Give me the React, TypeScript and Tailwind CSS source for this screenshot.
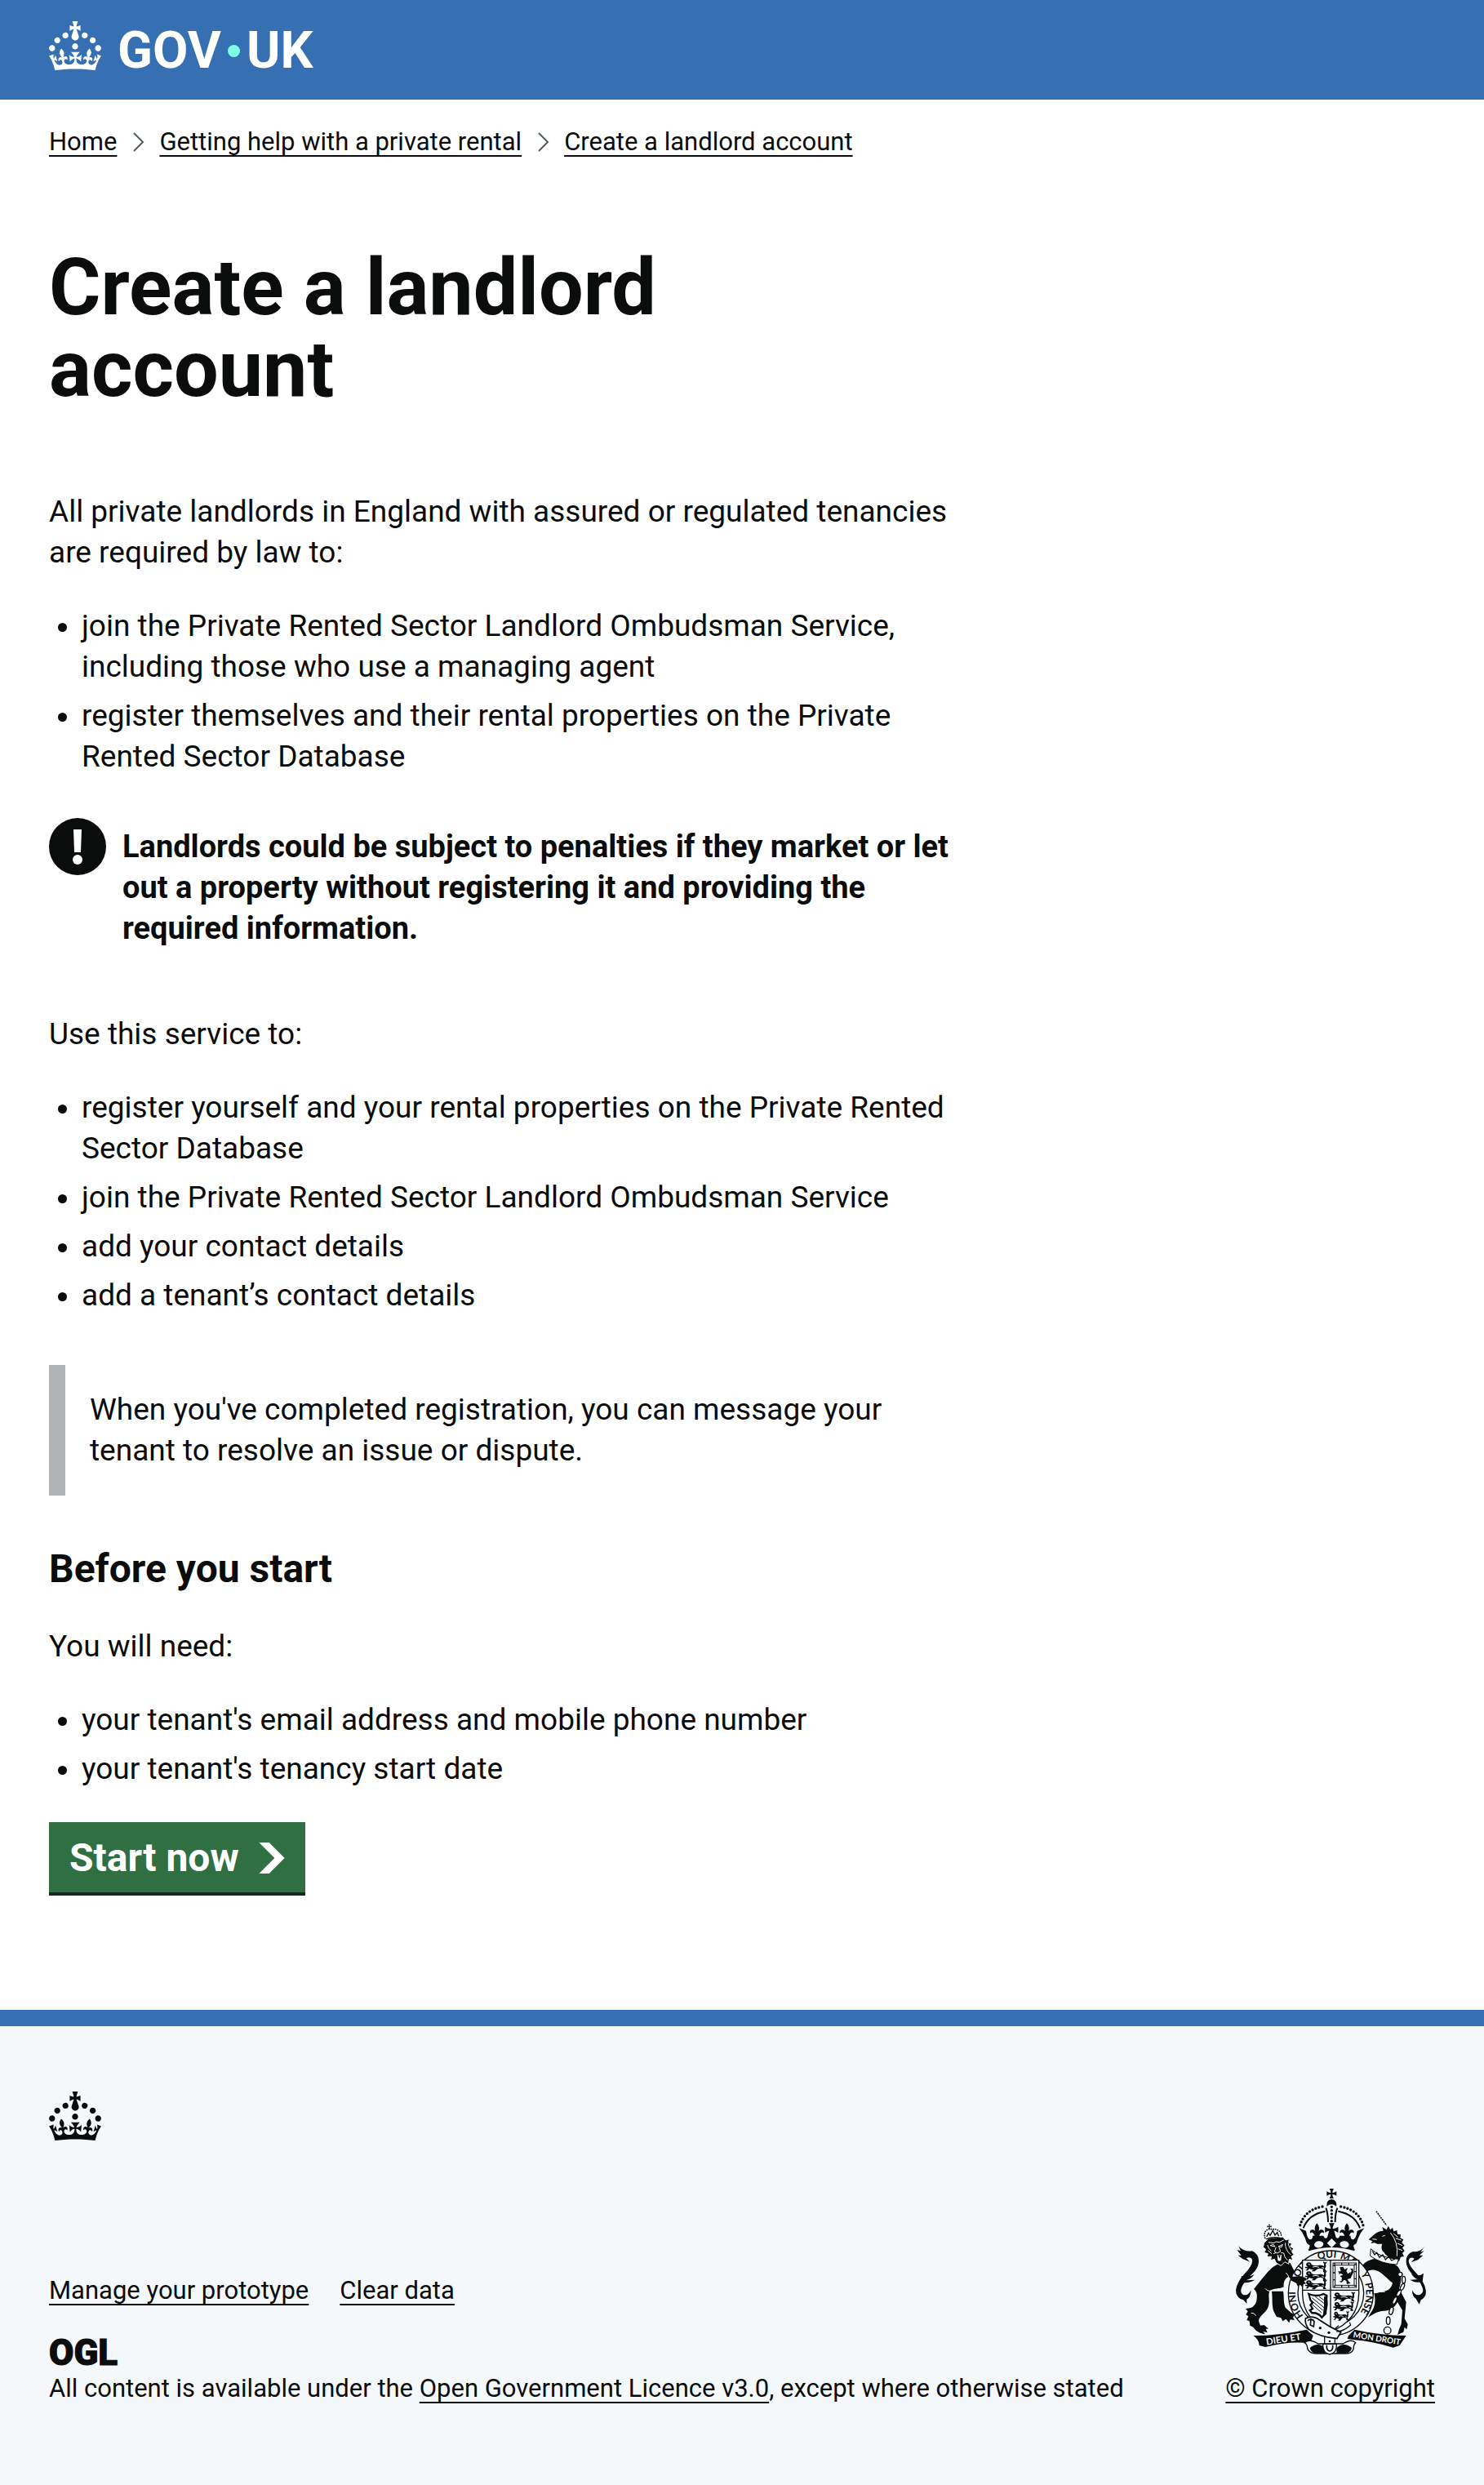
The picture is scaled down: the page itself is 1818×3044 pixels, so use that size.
import type { ReactNode } from "react";

const CROWN_PATH =
  "M22.6 10.4c-1 .4-2-.1-2.4-1-.4-.9.1-2 1-2.4.9-.4 2 .1 2.4 1s-.1 2-1 2.4m-5.9 6.7c-.9.4-2-.1-2.4-1-.4-.9.1-2 1-2.4.9-.4 2 .1 2.4 1s-.1 2-1 2.4m10.8-3.7c-1 .4-2-.1-2.4-1-.4-.9.1-2 1-2.4.9-.4 2 .1 2.4 1s0 2-1 2.4m3.3 4.8c-1 .4-2-.1-2.4-1-.4-.9.1-2 1-2.4.9-.4 2 .1 2.4 1s-.1 2-1 2.4M17 4.7l2.3 1.2V2.5l-2.3.7-.2-.2.9-3h-3.4l.9 3-.2.2c-.1.1-2.3-.7-2.3-.7v3.4L15 4.7c.1.1.1.2.2.2l-1.3 4c-.1.2-.1.4-.1.6 0 1.1.8 2 1.9 2.2h.7c1-.2 1.9-1.1 1.9-2.1 0-.2 0-.4-.1-.6l-1.3-4c-.1-.2 0-.2.1-.3m-7.6 5.7c.9.4 2-.1 2.4-1 .4-.9-.1-2-1-2.4-.9-.4-2 .1-2.4 1s0 2 1 2.4m-5 3c.9.4 2-.1 2.4-1 .4-.9-.1-2-1-2.4-.9-.4-2 .1-2.4 1s.1 2 1 2.4m-3.2 4.8c.9.4 2-.1 2.4-1 .4-.9-.1-2-1-2.4-.9-.4-2 .1-2.4 1s0 2 1 2.4m14.8 11c4.4 0 8.6.3 12.3.8 1.1-4.5 2.4-7 3.7-8.8l-2.5-.9c.2 1.3.3 1.9 0 2.7-.4-.4-.8-1.1-1.1-2.3l-1.2 4c.7-.5 1.3-.8 2-.9-1.1 2.5-2.6 3.1-3.5 3-1.1-.2-1.7-1.2-1.5-2.1.3-1.2 1.5-1.5 2.1-.1 1.1-2.3-.8-3-2-2.3 1.9-1.9 2.1-3.5.6-5.6-2.1 1.6-2.1 3.2-1.2 5.5-1.2-1.4-3.2-.6-2.5 1.6.9-1.4 2.1-.5 1.9.8-.2 1.1-1.7 2.1-3.5 1.9-2.7-.2-2.9-2.1-2.9-3.6.7-.1 1.9.5 2.9 1.9l.4-4.3c-1.1 1.1-2.1 1.4-3.2 1.4.4-1.2 2.1-3 2.1-3h-5.4s1.7 1.9 2.1 3c-1.1 0-2.1-.2-3.2-1.4l.4 4.3c1-1.4 2.2-2 2.9-1.9-.1 1.5-.2 3.4-2.9 3.6-1.9.2-3.4-.8-3.5-1.9-.2-1.3 1-2.2 1.9-.8.7-2.3-1.2-3-2.5-1.6.9-2.2.9-3.9-1.2-5.5-1.5 2-1.3 3.7.6 5.6-1.2-.7-3.1 0-2 2.3.6-1.4 1.8-1.1 2.1.1.2.9-.3 1.9-1.5 2.1-.9.2-2.4-.5-3.5-3 .6 0 1.2.3 2 .9l-1.2-4c-.3 1.1-.7 1.9-1.1 2.3-.3-.8-.2-1.4 0-2.7l-2.9.9C1.3 23 2.6 25.5 3.7 30c3.7-.5 7.9-.8 12.3-.8";

function Crown() {
  return (
    <svg viewBox="0 0 32 30" className="h-[60px] w-16 fill-current" aria-hidden="true">
      <path fillRule="evenodd" d={CROWN_PATH} />
    </svg>
  );
}

function TextLink({ children }: { children: ReactNode }) {
  return (
    <a href="#" className="underline decoration-2 underline-offset-[6px] [text-decoration-skip-ink:none]">
      {children}
    </a>
  );
}

function Chevron() {
  return (
    <svg viewBox="0 0 14 24" className="mr-[18px] ml-5 h-6 w-3.5 fill-none stroke-[#505a5f] stroke-2" aria-hidden="true">
      <path d="M1 1l11 11L1 23" />
    </svg>
  );
}

function BulletList({ items }: { items: string[] }) {
  return (
    <ul className="mb-10 list-disc space-y-2.5 pl-10">
      {items.map((item) => (
        <li key={item}>{item}</li>
      ))}
    </ul>
  );
}

function RoyalArms() {
  const ink = "#0b0c0c";
  const paper = "#f4f8fb";
  return (
    <svg viewBox="90 60 708 618" className="h-[206px] w-[236px]" aria-hidden="true" fill={ink} stroke="none">
      <defs>
        <path id="garterText" d="M365 549a130 130 0 1 1 160 0" />
        <g id="passant">
          <path d="M4 8q2-8 12-7 8 1 8 8 10 5 24 3 14-3 22 3l1-9q-6-3-4-8 8 6 14 0-1 8-5 8 3 14-3 18l5 9h-12l2-6q-12-7-24-1l-8 8h-12l7-7q-10 1-15-3l-6 7H2l8-8-10-2 1-4 9 1q-5-4-6-10z" />
          <path d="M12 8l6 1M28 18q12-4 24 1M62 20l8 2" stroke={paper} strokeWidth="3" fill="none" />
        </g>
        <path id="cross" d="M-8-18H8Q2-8 3-3 9-2 18-8V8Q9 2 3 3 2 9 8 18H-8Q-2 9-3 3-9 2-18 8V-8Q-9-2-3-3-2-8-8-18z" />
        <path id="lis" d="M0-32q14 16 4 34 4-13 15-10 9 3 6 13-5-6-11-1-6 6-6 18H-8q0-12-6-18-6-5-11 1-3-10 6-13 11-3 15 10-10-18 4-34z" />
      </defs>

      {/* lion */}
      <path d="M242 345C222 355 200 385 162 432C172 440 176 450 172 475C168 490 160 500 146 502L132 504 140 514 133 526 142 532 136 546 146 550 148 566 160 572C172 590 186 594 204 598L196 588 212 592 206 578 216 578 200 564 186 566 180 550C180 530 206 520 214 500C224 476 212 456 220 440C232 428 258 432 272 424C270 408 276 392 290 386C300 400 318 408 328 422L334 412 346 426 346 410 356 408 346 396 350 388 330 384C314 376 306 356 296 336L270 330z" />
      <path d="M228 440H270C274 460 270 480 278 500L300 520 312 526 306 536 312 546 296 544 292 556 280 542 268 550 262 538 246 534 238 520C226 496 232 470 228 440z" />
      <path
        d="M200 262L216 246 268 240 280 252 292 248 290 262 302 264 296 276 308 282 302 296 310 306 300 312 306 326 292 322 290 340 276 332 262 346 244 336 238 322 224 326 226 312 210 314 214 302 200 298 206 286 196 278z"
        stroke={paper}
        strokeWidth="3"
      />
      <g stroke={paper} strokeWidth="3" fill="none">
        <path d="M216 260l18 3 10-5 12 2 16-8M222 272l12-4 6 8zM252 276l16-8-4 10zM244 278l-6 16 10 6 12-6-4-14M234 302l10-4M262 298l10 2M278 262q-2 26 20 44M288 264q2 14 14 28M272 300q2 16 14 26M212 270q4 14 14 22M214 290l14 12M204 430q10 14 28 6M152 520q12-2 18 10M280 372q8 8 10 14" />
      </g>
      <path d="M248 306q8 4 16 0l-2 20q-6 6-12 0z" fill={paper} />
      <path d="M252 308l4 12 4-12z" />
      <g fill="none" stroke={ink} strokeLinecap="round">
        <path d="M203 244q-7-24 13-32h26q24 7 20 28" strokeWidth="5" strokeDasharray="1 7" />
        <path d="M208 248q24-9 50-4M210 238l6-12 6 9 10-18 8 17 8-10 5 12" strokeWidth="4" />
      </g>
      <use href="#cross" transform="translate(219 202) scale(.45)" />
      <path d="M106 274q18 22 50 18 26 12 24 40-2 24-22 42-24 22-38 46-12 22 2 32 18 8 30-16-2 28-16 34l0 16-12-14q-28-6-28-36 4-30 32-60 32-34 28-52-4-12-22-6l14 14-26-10-18-14 12 0-16-20 14 4z" />
      <path d="M116 384q24 8 48-6-12 18-32 22l34-2q-22 14-48 10z" />

      {/* unicorn */}
      <path d="M612 146l38 52" stroke={ink} strokeWidth="5" strokeDasharray="6 3" fill="none" />
      <path d="M600 322C640 316 672 336 690 348C708 366 706 400 696 430L722 480 716 540 728 562 724 580 716 572 712 590 690 600 696 580 704 560 708 510 690 480C680 500 662 512 640 512C614 514 600 524 582 536L590 522C606 500 612 480 604 448L640 440C660 438 668 424 672 410C650 392 630 366 606 362C590 360 574 366 568 380L570 400 578 420 572 446 562 442 556 420C548 396 548 366 560 348C570 330 590 326 600 322z" />
      <path d="M584 250L606 230Q620 218 638 218L634 204 650 214 656 200 664 214 672 206 676 220 688 216 690 230 702 232 700 244 712 250 706 260 716 272 708 280 716 292 708 300 714 312 702 314 696 330 680 322C660 320 646 306 640 296C630 290 630 276 634 266L616 266 606 262 592 264 598 256z" />
      <path
        d="M634 238l10-3M598 248l16 2M664 225q30 34 24 86M676 228l16 14M684 246l20 6M690 264l18 8M692 284l16 6"
        stroke={paper}
        strokeWidth="3"
        fill="none"
      />
      <path d="M592 284q34 34 102 38l-6 20q-58-2-98-32z" fill={paper} stroke={ink} strokeWidth="3" />
      <path d="M598 292l8 14 8-8 10 18 12-10 10 18 12-12 10 15 14-7" fill="none" stroke={ink} strokeWidth="4" />
      <path d="M610 446q14-6 34-4" stroke={paper} strokeWidth="3" fill="none" />
      <path d="M792 274q-18 24-44 20-28 8-26 40 2 24 24 44 24 20 34 44 10 22-6 30-18 8-30-16 0 24 14 32l12 20 6-16q22-10 18-36-4-30-36-64-32-34-26-48 6-12 20-4l-12 14 26-10 18-16-14 0 18-16-14 4z" />
      <path d="M786 374q-20 16-46 0 12 20 26 22l-30 2q20 14 46 6z" />
      <g fill={paper} stroke={ink} strokeWidth="4">
        <ellipse cx="700" cy="378" rx="8" ry="8" />
        <ellipse cx="713" cy="398" rx="6" ry="13" />
        <ellipse cx="708" cy="424" rx="6" ry="13" transform="rotate(25 708 424)" />
        <ellipse cx="695" cy="447" rx="6" ry="13" transform="rotate(30 695 447)" />
        <ellipse cx="680" cy="474" rx="6" ry="14" transform="rotate(25 680 474)" />
        <ellipse cx="667" cy="512" rx="7" ry="14" transform="rotate(15 667 512)" />
        <ellipse cx="656" cy="548" rx="7" ry="14" />
        <circle cx="653" cy="584" r="13" />
      </g>

      {/* garter */}
      <circle cx="445" cy="447" r="156" fill={paper} stroke={ink} strokeWidth="4" />
      <circle cx="445" cy="447" r="121" fill="none" stroke={ink} strokeWidth="4" />
      <g fontFamily="Lato, sans-serif" fontSize="36" fontWeight="700">
        <text><textPath href="#garterText" startOffset="28">HONI</textPath></text>
        <text><textPath href="#garterText" startOffset="155">SOIT</textPath></text>
        <text><textPath href="#garterText" startOffset="275">QUI</textPath></text>
        <text><textPath href="#garterText" startOffset="355">MAL</textPath></text>
        <text><textPath href="#garterText" startOffset="452">Y</textPath></text>
        <text><textPath href="#garterText" startOffset="490">PENSE</textPath></text>
      </g>

      {/* shield */}
      <path d="M341 326H548V450Q546 548 445 588 343 548 341 450z" fill={paper} stroke={ink} strokeWidth="4" />
      <path d="M444 326V586M341 436H548" stroke={ink} strokeWidth="4" />
      <use href="#passant" x="350" y="333" />
      <use href="#passant" x="350" y="366" />
      <use href="#passant" x="350" y="399" />
      <use href="#passant" x="454" y="444" />
      <use href="#passant" transform="translate(454 479) scale(.95 1)" />
      <use href="#passant" transform="translate(454 514) scale(.72 1)" />
      <rect x="453" y="336" width="86" height="90" fill="none" stroke={ink} strokeWidth="3" />
      <rect x="461" y="344" width="70" height="74" fill="none" stroke={ink} strokeWidth="3" />
      <path d="M457 340H535V422H457z" fill="none" stroke={ink} strokeWidth="9" strokeDasharray="4 22" />
      <path d="M478 352l12-2 6 10 12-6-6 12 6 10 10-8-2 10 6-14-6-6 10-2 2 14-10 22-12 4 6 10 6 4-14 4-2-12-8-4-10 10-8-4 8-2 2-12-8-6 12-4-8-6-8 4 2-6-6-4 12-2z" />
      <path
        d="M364 450q30 12 54 0l12 6-4 66-14 14q-14-18-36-16l-8-10 10-6-8-14 8-8-8-10z"
        fill="none"
        stroke={ink}
        strokeWidth="7"
      />
      <path d="M376 464l44 36M376 476l40 34M376 488l34 30M388 460l34 26M402 460l20 14" stroke={ink} strokeWidth="3" />
      <path d="M428 458q14 28-4 66l-8 6q6-36 4-70z" />
      <path d="M300 388l30 -4 22 6 4 10-10 2 8 10-10 2-2 12-10-10-8 6-6-12-20-10z" />

      {/* crown */}
      <path d="M328 206q60-30 240 2l-26 82q-98-32-184 0z" fill={paper} />
      <path d="M328 208l26 10q4 28 14 32 12-2 10-14h40q4 14 14 6l8-28h16l8 28q10 8 14-6h40q-2 12 10 14 10-4 14-32l26-10q-26 30-36 84-84-26-168 0-10-54-36-84z" />
      <use href="#lis" x="394" y="222" />
      <use href="#lis" x="504" y="222" />
      <use href="#cross" transform="translate(448 214) scale(1.35)" />
      <g fill={paper}>
        <path d="M448 246l17 17-17 17-17-17zM358 264l10 8-4 14-10-5zM538 264l-10 8 4 14 10-5z" />
        <ellipse cx="401" cy="268" rx="17" ry="12" transform="rotate(-8 401 268)" />
        <ellipse cx="495" cy="268" rx="17" ry="12" transform="rotate(8 495 268)" />
      </g>
      <g fill="none" stroke={ink}>
        <path d="M424 146Q362 158 344 208M472 146Q534 158 552 208" strokeWidth="6" />
        <path
          d="M414 129Q346 142 331 202M482 129Q550 142 565 202"
          strokeWidth="10"
          strokeLinecap="round"
          strokeDasharray="0 12.5"
        />
        <path d="M427 134q8 20 8 52M469 134q-8 20-8 52" strokeWidth="6" />
        <path d="M448 130v60" strokeWidth="10" strokeLinecap="round" strokeDasharray="0 13" />
      </g>
      <path d="M430 128q-2-24 18-26 20 2 18 26-18-14-36 0z" />
      <use href="#cross" x="448" y="81" />

      {/* ribbons and buckle */}
      <path d="M160 603q96 0 196-22l24 22-6 18-26 8q-70-4-144 16l-22-6q0-22-22-36z" />
      <path d="M722 603q-100-2-190-22l-22 22-4 12 26 4q60 4 142 28l24-8z" />
      <g fontFamily="Lato, sans-serif" fontWeight="700" fill={paper}>
        <text transform="translate(209 638) rotate(-9)" fontSize="34">DIEU ET</text>
        <text transform="translate(526 610) rotate(9)" fontSize="30">MON DROIT</text>
      </g>
      <path
        d="M348 629q10 4 12 24 8 16 30 16h108q24 0 30-16 0-16 8-24-16-16-46 4h-92q-30-20-50-4z"
        fill={paper}
        stroke={ink}
        strokeWidth="4"
      />
      <path d="M368 648q30-24 56 0v20h-36q-18-4-20-20zM522 648q-30-24-56 0v20h36q18-4 20-20z" />
      <path d="M352 540q26-14 52 6 36 26 78 44l-14 24q-66-6-104-34-16-22-12-40z" fill={paper} stroke={ink} strokeWidth="5" />
      <path d="M372 542l12 8-2 20-12-6zM360 548q10-8 22-2" fill="none" stroke={ink} strokeWidth="5" />
      <path d="M466 588q26 0 52-24l-4-10M458 580l16-14" fill="none" stroke={ink} strokeWidth="4" />
      <path d="M422 606v30M460 614v22" stroke={ink} strokeWidth="4" />
      <path d="M416 634h50q2 34-25 38-27-4-25-38z" fill={paper} stroke={ink} strokeWidth="4" />
      <path d="M430 638q-2 20 11 22 13-2 11-22" fill="none" stroke={ink} strokeWidth="5" />
      <circle cx="406" cy="575" r="5" />
      <circle cx="438" cy="592" r="5" />
      <circle cx="441" cy="624" r="4" />
    </svg>
  );
}

export default function App() {
  return (
    <div className="min-h-screen bg-white font-[Roboto,sans-serif] text-[37px] leading-[50px] text-[#0b0c0c]">
      <header className="bg-[#3670b2] px-[60px] pt-[26px] pb-9 text-white">
        <a href="#" aria-label="GOV.UK" className="flex h-[60px] w-fit items-center">
          <Crown />
          <span className="ml-5 flex items-center pt-3 text-[63px] leading-[60px] font-bold">
            GOV
            <span className="mx-2 size-[15px] rounded-full bg-[#7dffe2]" />
            UK
          </span>
        </a>
      </header>

      <div className="px-[60px]">
        <nav aria-label="Breadcrumb" className="pt-8">
          <ol className="flex items-center text-[31px] leading-10">
            <li><TextLink>Home</TextLink></li>
            <li className="flex items-center"><Chevron /><TextLink>Getting help with a private rental</TextLink></li>
            <li className="flex items-center"><Chevron /><TextLink>Create a landlord account</TextLink></li>
          </ol>
        </nav>

        <main className="w-2/3 pt-[108px]">
          <h1 className="mb-[100px] max-w-[1000px] text-[97px] leading-[100px] font-bold">Create a landlord account</h1>
          <p className="mb-10">
            All private landlords in England with assured or regulated tenancies are required by law to:
          </p>
          <BulletList
            items={[
              "join the Private Rented Sector Landlord Ombudsman Service, including those who use a managing agent",
              "register themselves and their rental properties on the Private Rented Sector Database",
            ]}
          />
          <div className="mt-[50px] mb-20 flex gap-5">
            <svg viewBox="0 0 70 70" className="size-[70px] shrink-0" role="img" aria-label="Warning">
              <circle cx="35" cy="35" r="35" fill="#0b0c0c" />
              <path d="M30 14h10l-1 28h-8z" fill="white" />
              <circle cx="35" cy="51" r="6" fill="white" />
            </svg>
            <strong className="pt-2.5 text-[38px] font-bold">
              Landlords could be subject to penalties if they market or let out a property without registering it and
              providing the required information.
            </strong>
          </div>
          <p className="mb-10">Use this service to:</p>
          <BulletList
            items={[
              "register yourself and your rental properties on the Private Rented Sector Database",
              "join the Private Rented Sector Landlord Ombudsman Service",
              "add your contact details",
              "add a tenant’s contact details",
            ]}
          />
          <div className="my-[60px] border-l-[20px] border-[#b1b4b6] p-[30px]">
            When you've completed registration, you can message your tenant to resolve an issue or dispute.
          </div>
          <h2 className="mb-10 text-[48px] leading-[60px] font-bold">Before you start</h2>
          <p className="mb-10">You will need:</p>
          <BulletList items={["your tenant's email address and mobile phone number", "your tenant's tenancy start date"]} />
          <button
            type="button"
            className="flex items-center gap-6 border-b-4 border-[#0f2d1a] bg-[#2f6f42] px-[25px] pt-3.5 pb-3 text-[48px] leading-[60px] font-bold text-white"
          >
            Start now
            <svg viewBox="0 0 33 40" className="h-[38px] w-8 fill-current" aria-hidden="true">
              <path d="M0 0h13l20 20-20 20H0l20-20z" />
            </svg>
          </button>
        </main>
      </div>

      <footer className="mt-[140px] border-t-[20px] border-[#3670b2] bg-[#f4f8fb] px-[60px] pt-20 pb-[100px] text-[31px] leading-10">
        <Crown />
        <div className="mt-[58px] flex items-end justify-between">
          <div>
            <ul className="mb-9 flex gap-[38px]">
              <li><TextLink>Manage your prototype</TextLink></li>
              <li><TextLink>Clear data</TextLink></li>
            </ul>
            <div className="mb-1 text-[44px] leading-10 font-black [-webkit-text-stroke:1px_#0b0c0c]">OGL</div>
            <p>
              All content is available under the <TextLink>Open Government Licence v3.0</TextLink>, except where
              otherwise stated
            </p>
          </div>
          <div className="flex flex-col items-center gap-5">
            <RoyalArms />
            <TextLink>© Crown copyright</TextLink>
          </div>
        </div>
      </footer>
    </div>
  );
}
